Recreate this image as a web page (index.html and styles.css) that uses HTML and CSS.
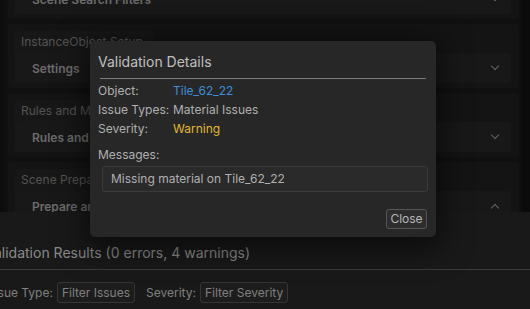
FILE: index.html
```html
<!DOCTYPE html>
<html>
<head>
<meta charset="utf-8">
<link rel="stylesheet" href="styles.css">
</head>
<body>
<div class="app">
  <div class="scroll-area">
    <div class="scroll-content">
      <div class="section">
        <div class="section-title"><span>Scene Search</span></div>
        <div class="fold"><span>Scene Search Filters</span><span class="chev down"></span></div>
      </div>
      <div class="section">
        <div class="section-title"><span>InstanceObject Setup</span></div>
        <div class="fold"><span>Settings</span><span class="chev down"></span></div>
      </div>
      <div class="section">
        <div class="section-title"><span>Rules and Materials</span></div>
        <div class="fold"><span>Rules and Materials</span><span class="chev down"></span></div>
      </div>
      <div class="section">
        <div class="section-title"><span>Scene Preparation</span></div>
        <div class="fold"><span>Prepare and Validate</span><span class="chev up"></span></div>
      </div>
    </div>
  </div>
  <div class="results">
    <div class="results-title">Validation Results (0 errors, 4 warnings)</div>
    <div class="results-sep"></div>
    <div class="filters">
      <span class="flabel">Issue Type:</span>
      <span class="fbox">Filter Issues</span>
      <span class="flabel sev">Severity:</span>
      <span class="fbox">Filter Severity</span>
    </div>
  </div>

  <div class="dialog">
    <div class="dlg-title">Validation Details</div>
    <div class="dlg-sep"></div>
    <div class="dlg-rows">
      <div class="row"><span class="lbl">Object:</span><span class="val obj">Tile_62_22</span></div>
      <div class="row"><span class="lbl">Issue Types:</span><span class="val">Material Issues</span></div>
      <div class="row"><span class="lbl">Severity:</span><span class="val warn">Warning</span></div>
    </div>
    <div class="msg-label">Messages:</div>
    <div class="msg-box">Missing material on Tile_62_22</div>
    <div class="dlg-footer"><button class="close-btn">Close</button></div>
  </div>
</div>
</body>
</html>
```

FILE: styles.css
```css
html, body {
  margin: 0;
  padding: 0;
}
body {
  background: #0f0f0f;
  font-family: Inter, "Noto Sans", sans-serif;
  width: 530px;
  height: 309px;
  overflow: hidden;
}
.app {
  position: relative;
  width: 530px;
  height: 309px;
  display: flex;
  flex-direction: column;
  overflow: hidden;
  background: linear-gradient(to right, #0c0c0c 0, #101010 8px, #101010 520px, #0b0b0b 522px);
}
.scroll-area {
  height: 212px;
  overflow: hidden;
  flex: none;
}
.scroll-content {
  margin-top: -45px;
  padding: 0 11px 0 8px;
  display: flex;
  flex-direction: column;
  gap: 5px;
}
.section {
  background: #141414;
  border-radius: 4px;
  height: 64px;
  box-sizing: border-box;
  padding: 7px 8px 0 7px;
  display: flex;
  flex-direction: column;
}
.section-title {
  height: 22px;
  display: flex;
}
.section-title span {
  background: #171717;
  border-radius: 4px 4px 0 0;
  padding: 0 6px;
  line-height: 22px;
  font-size: 12px;
  color: #545454;
  width: 128px;
  white-space: nowrap;
}
.fold {
  height: 30px;
  background: #181818;
  border-radius: 3px;
  display: flex;
  align-items: center;
  justify-content: space-between;
  padding: 0 13px 0 17px;
  font-size: 12px;
  font-weight: 600;
  color: #6c6c6c;
}
.chev {
  width: 5px;
  height: 5px;
  border-right: 1.2px solid #646464;
  border-bottom: 1.2px solid #646464;
}
.chev.down {
  transform: translateY(-2px) rotate(45deg);
}
.chev.up {
  transform: translateY(2px) rotate(-135deg);
}
.results {
  flex: 1;
  background: #191919;
  display: flex;
  flex-direction: column;
}
.results-title {
  margin-top: 31px;
  margin-left: -15px;
  font-size: 14px;
  line-height: 20px;
  color: #8a8a8a;
  white-space: nowrap;
}
.results-sep {
  margin-top: 6px;
  height: 1px;
  background: #3a3a3a;
}
.filters {
  margin-top: 12px;
  margin-left: -12px;
  display: flex;
  align-items: center;
  font-size: 12px;
  color: #808080;
  white-space: nowrap;
}
.flabel {
  margin-right: 4px;
}
.flabel.sev {
  margin-left: 11px;
}
.fbox {
  border: 1px solid #353535;
  border-radius: 3px;
  background: #1d1d1d;
  padding: 0 4px;
  height: 19px;
  line-height: 19px;
}
.dialog {
  position: absolute;
  left: 90px;
  top: 41px;
  width: 346px;
  height: 196px;
  box-sizing: border-box;
  background: #272727;
  border-radius: 5px;
  box-shadow: 0 6px 30px 6px rgba(0, 0, 0, 0.55);
  padding: 10px 8px 0 8px;
  display: flex;
  flex-direction: column;
  color: #b0b0b0;
  font-size: 12px;
}
.dlg-title {
  font-size: 14px;
  line-height: 22px;
  color: #c0c0c0;
}
.dlg-sep {
  margin: 5px 2px 0 2px;
  height: 1px;
  background: #7c7c7c;
}
.dlg-rows {
  margin-top: 2px;
  display: flex;
  flex-direction: column;
}
.row {
  display: flex;
  line-height: 19px;
}
.lbl {
  width: 75px;
  flex: none;
}
.val.obj {
  color: #3d8fd6;
}
.val.warn {
  color: #e2b831;
}
.msg-label {
  margin-top: 7px;
  line-height: 19px;
}
.msg-box {
  margin: 2px 0 0 4px;
  height: 26px;
  box-sizing: border-box;
  border: 1px solid #3a3a3a;
  border-radius: 3px;
  background: #2a2a2a;
  padding-left: 8px;
  line-height: 24px;
  color: #b0b0b0;
}
.dlg-footer {
  margin-top: 17px;
  display: flex;
  justify-content: flex-end;
  padding-right: 1px;
}
.close-btn {
  font-family: Inter, "Noto Sans", sans-serif;
  font-size: 12px;
  color: #b8b8b8;
  background: #2d2d2d;
  border: 1px solid #565656;
  border-radius: 3px;
  height: 20px;
  width: 41px;
  padding: 0;
  line-height: 18px;
}
```
